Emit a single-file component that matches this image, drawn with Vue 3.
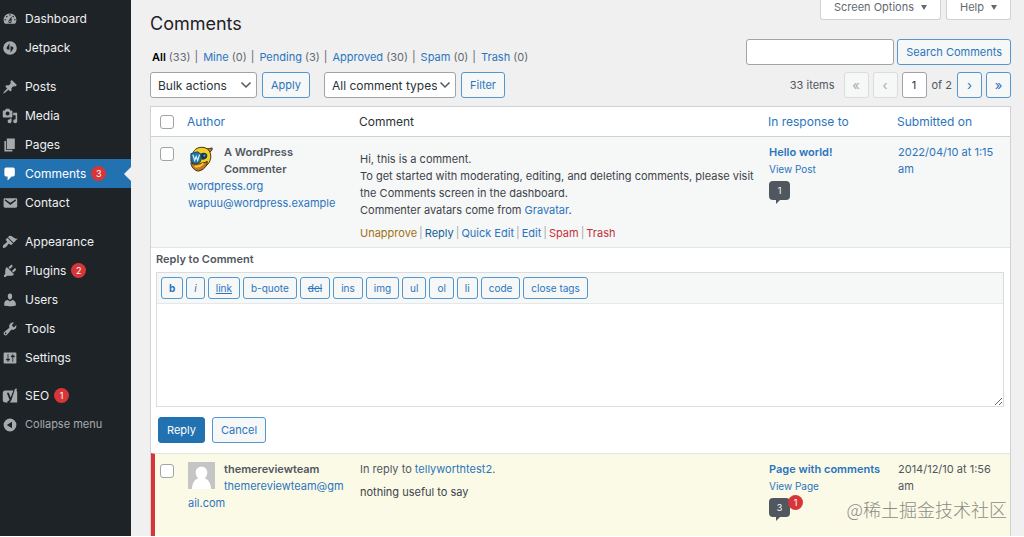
<script setup>
import { ref } from 'vue'

const groups = [
  [
    { label: 'Dashboard', icon: 'M3.76 16h12.48c1.1-1.37 1.76-3.11 1.76-5 0-4.42-3.58-8-8-8s-8 3.58-8 8c0 1.89.66 3.63 1.76 5zM10 4c.55 0 1 .45 1 1s-.45 1-1 1-1-.45-1-1 .45-1 1-1zM6 6c.55 0 1 .45 1 1s-.45 1-1 1-1-.45-1-1 .45-1 1-1zm8 0c.55 0 1 .45 1 1s-.45 1-1 1-1-.45-1-1 .45-1 1-1zm-5.37 5.55L12 7v6c0 1.1-.9 2-2 2s-2-.9-2-2c0-.57.24-1.08.63-1.45zM4 10c.55 0 1 .45 1 1s-.45 1-1 1-1-.45-1-1 .45-1 1-1zm12 0c.55 0 1 .45 1 1s-.45 1-1 1-1-.45-1-1 .45-1 1-1zm-5 3c0-.55-.45-1-1-1s-1 .45-1 1 .45 1 1 1 1-.45 1-1z' },
    { label: 'Jetpack', icon: 'M10 1.5a8.5 8.5 0 1 0 0 17a8.5 8.5 0 1 0 0-17zM9.3 4v8.2C6 12 5 10.5 6 9zM10.7 16V7.8C14 8 15 9.5 14 11z' },
  ],
  [
    { label: 'Posts', icon: 'M10.44 3.02l1.82-1.82 6.36 6.35-1.83 1.82c-1.05-.68-2.48-.57-3.41.36l-.75.75c-.92.93-1.04 2.35-.35 3.41l-1.83 1.82-2.41-2.41-2.8 2.79c-.42.42-3.38 2.71-3.8 2.29s1.86-3.39 2.28-3.81l2.79-2.79L4.1 9.36l1.83-1.82c1.05.69 2.48.57 3.4-.36l.75-.75c.93-.92 1.05-2.35.36-3.41z' },
    { label: 'Media', icon: 'M13 11V4c0-.55-.45-1-1-1h-1.67L9 1H5L3.67 3H2c-.55 0-1 .45-1 1v7c0 .55.45 1 1 1h10c.55 0 1-.45 1-1zM7 4.5c1.38 0 2.5 1.12 2.5 2.5S8.38 9.5 7 9.5 4.5 8.38 4.5 7 5.62 4.5 7 4.5zM14 6h5v10.5c0 1.38-1.12 2.5-2.5 2.5S14 17.88 14 16.5s1.12-2.5 2.5-2.5c.17 0 .34.02.5.05V9h-3V6zm-4 8.05V13h2v3.5c0 1.38-1.12 2.5-2.5 2.5S7 17.88 7 16.5 8.12 14 9.5 14c.17 0 .34.02.5.05z' },
    { label: 'Pages', icon: 'M6 15V2h10v13H6zm-1 1h8v2H3V5h2v11z' },
    { label: 'Comments', count: 3, current: true, icon: 'M5 2h9c1.1 0 2 .9 2 2v7c0 1.1-.9 2-2 2h-2l-5 5v-5H5c-1.1 0-2-.9-2-2V4c0-1.1.9-2 2-2z' },
    { label: 'Contact', icon: 'M3.87 4h13.25C18.37 4 19 4.59 19 5.79v8.42c0 1.19-.63 1.79-1.88 1.79H3.87c-1.25 0-1.88-.6-1.88-1.79V5.79c0-1.2.63-1.79 1.88-1.79zm6.62 8.6l6.74-5.53c.24-.2.43-.66.13-1.07-.29-.41-.82-.42-1.17-.17l-5.7 3.86L4.8 5.83c-.35-.25-.88-.24-1.17.17-.3.41-.11.87.13 1.07z' },
  ],
  [
    { label: 'Appearance', icon: 'M14.48 11.06L7.41 3.99l1.5-1.5c.5-.56 2.3-.47 3.51.32 1.21.8 1.43 1.28 2.91 2.1 1.18.64 2.45 1.26 4.45.85zm-.71.71L6.7 4.7 4.93 6.47c-.39.39-.39 1.02 0 1.41l1.06 1.06c.39.39.39 1.03 0 1.42-.6.6-1.43 1.11-2.21 1.69-.35.26-.7.53-1.01.84C1.43 14.23.4 16.08 1.4 17.07c.99 1 2.84-.03 4.18-1.36.31-.31.58-.66.85-1.02.57-.78 1.08-1.61 1.69-2.21.39-.39 1.02-.39 1.41 0l1.06 1.06c.39.39 1.02.39 1.41 0z' },
    { label: 'Plugins', count: 2, icon: 'M13.11 4.36L9.87 7.6 8 5.73l3.24-3.24c.35-.34 1.05-.2 1.56.32.52.51.66 1.21.31 1.55zm-8 1.77l.91-1.12 9.01 9.01-1.19.84c-.71.71-2.63 1.16-3.82 1.16H6.14L4.9 17.26c-.59.59-1.54.59-2.12 0-.59-.58-.59-1.53 0-2.12l1.24-1.24v-3.88c0-1.13.4-3.19 1.09-3.89zm7.26 3.97l3.24-3.24c.34-.35 1.04-.21 1.55.31.52.51.66 1.21.31 1.55l-3.24 3.25z' },
    { label: 'Users', icon: 'M10 9.25c-2.27 0-2.73-3.44-2.73-3.44C7 4.02 7.82 2 9.97 2c2.16 0 2.98 2.02 2.71 3.81 0 0-.41 3.44-2.68 3.44zm0 2.57L12.72 10c2.39 0 4.52 2.33 4.52 4.53v2.49s-3.65 1.13-7.24 1.13c-3.65 0-7.24-1.13-7.24-1.13v-2.49c0-2.25 1.94-4.48 4.47-4.48z' },
    { label: 'Tools', icon: 'M16.68 9.77c-1.34 1.34-3.3 1.67-4.95.99l-5.41 6.52c-.99.99-2.59.99-3.58 0s-.99-2.59 0-3.57l6.52-5.42c-.68-1.65-.35-3.61.99-4.95 1.28-1.28 3.12-1.62 4.72-1.06l-2.89 2.89 2.82 2.82 2.86-2.87c.53 1.58.18 3.39-1.08 4.65zM3.81 16.21c.4.39 1.04.39 1.43 0 .4-.4.4-1.04 0-1.43-.39-.4-1.03-.4-1.43 0-.39.39-.39 1.03 0 1.43z' },
    { label: 'Settings', icon: 'M18 16V4c0-.55-.45-1-1-1H3c-.55 0-1 .45-1 1v12c0 .55.45 1 1 1h14c.55 0 1-.45 1-1zM8 11h1c.55 0 1 .45 1 1s-.45 1-1 1H8v1.5c0 .28-.22.5-.5.5s-.5-.22-.5-.5V13H6c-.55 0-1-.45-1-1s.45-1 1-1h1V5.5c0-.28.22-.5.5-.5s.5.22.5.5V11zm5-2h-1c-.55 0-1-.45-1-1s.45-1 1-1h1V5.5c0-.28.22-.5.5-.5s.5.22.5.5V7h1c.55 0 1 .45 1 1s-.45 1-1 1h-1v5.5c0 .28-.22.5-.5.5s-.5-.22-.5-.5V9z' },
  ],
  [
    { label: 'SEO', count: 1, icon: 'M4 3h10.3l-3.6 9L8.6 6H6l3.4 8.6c-.4 1.2-1 1.7-2.4 1.8V18H4c-1.6 0-3-1.2-3-2.8V6c0-1.7 1.3-3 3-3zM16.3 1h2.5l-.7 2c.6.6.9 1.5.9 2.8V18H9.5c1.2-.8 1.9-1.8 2.4-3.2z' },
  ],
]

const filters = [
  { label: 'All', count: 33, current: true },
  { label: 'Mine', count: 0 },
  { label: 'Pending', count: 3 },
  { label: 'Approved', count: 30 },
  { label: 'Spam', count: 0 },
  { label: 'Trash', count: 0 },
]

const tags = [
  { label: 'b', look: 'bold' },
  { label: 'i', look: 'italic' },
  { label: 'link', look: 'underlined' },
  { label: 'b-quote' },
  { label: 'del', look: 'struck' },
  { label: 'ins' },
  { label: 'img' },
  { label: 'ul' },
  { label: 'ol' },
  { label: 'li' },
  { label: 'code' },
  { label: 'close tags' },
]

const bulk = ref('Bulk actions')
const type = ref('All comment types')
const query = ref('')
const page = ref('1')
const reply = ref('')
</script>

<template>
  <div class="admin">
    <nav class="sidebar" aria-label="Main menu">
      <ul v-for="(group, g) in groups" :key="g" class="group">
        <li v-for="item in group" :key="item.label">
          <a href="#" class="item" :class="{ current: item.current }">
            <svg class="icon" viewBox="0 0 20 20" aria-hidden="true"><path fill-rule="evenodd" :d="item.icon" /></svg>
            <span>{{ item.label }}</span>
            <span v-if="item.count" class="count">{{ item.count }}</span>
          </a>
        </li>
      </ul>
      <button type="button" class="item collapse">
        <svg class="icon" viewBox="0 0 20 20" aria-hidden="true"><path fill-rule="evenodd" d="M10 2a8 8 0 1 0 0 16a8 8 0 1 0 0-16zM12.5 6v8L6 10z" /></svg>
        <span>Collapse menu</span>
      </button>
    </nav>

    <main class="content">
      <header class="head">
        <h1>Comments</h1>
        <div class="screen-meta">
          <button type="button">Screen Options <i class="caret"></i></button>
          <button type="button">Help <i class="caret"></i></button>
        </div>
      </header>

      <div class="bar">
        <ul class="filters">
          <li v-for="f in filters" :key="f.label">
            <a href="#" :class="{ on: f.current }">{{ f.label }}</a> ({{ f.count }})
          </li>
        </ul>
        <form class="search" @submit.prevent>
          <input v-model="query" type="search" class="field" aria-label="Search Comments" />
          <button class="button">Search Comments</button>
        </form>
      </div>

      <div class="bar actions-bar">
        <div class="set">
          <span class="pick">
            <select v-model="bulk" aria-label="Select bulk action"><option>Bulk actions</option></select>
            <svg viewBox="0 0 12 12" aria-hidden="true"><path d="M1.5 3.5L6 8l4.5-4.5" /></svg>
          </span>
          <button type="button" class="button">Apply</button>
        </div>
        <div class="set">
          <span class="pick types">
            <select v-model="type" aria-label="Filter by comment type"><option>All comment types</option></select>
            <svg viewBox="0 0 12 12" aria-hidden="true"><path d="M1.5 3.5L6 8l4.5-4.5" /></svg>
          </span>
          <button type="button" class="button">Filter</button>
        </div>
        <div class="pager">
          <span class="total">33 items</span>
          <button type="button" class="button step" disabled>«</button>
          <button type="button" class="button step" disabled>‹</button>
          <input v-model="page" class="field page" aria-label="Current page" />
          <span class="of">of 2</span>
          <button type="button" class="button step">›</button>
          <button type="button" class="button step">»</button>
        </div>
      </div>

      <table class="list">
        <colgroup>
          <col class="c-check" /><col class="c-author" /><col /><col class="c-response" /><col class="c-date" />
        </colgroup>
        <thead>
          <tr>
            <th><input type="checkbox" aria-label="Select all" /></th>
            <th><a href="#">Author</a></th>
            <th>Comment</th>
            <th><a href="#">In response to</a></th>
            <th><a href="#">Submitted on</a></th>
          </tr>
        </thead>
        <tbody>
          <tr class="approved">
            <td class="check"><input type="checkbox" aria-label="Select comment by A WordPress Commenter" /></td>
            <td>
              <svg class="avatar" viewBox="0 0 28 28" aria-hidden="true">
                <path d="M16 3c3 1.5 6 1 9 0 .5 2.5-1 4-4 4.5z" fill="#c27725" stroke="#3d2b10" />
                <path d="M5 9C6 4 12 1 18 3c6 2 7 10 4 15-3 5-11 8-15 5-3-3-3-9-2-14z" fill="#f5cf26" stroke="#3d2b10" />
                <path d="M3 9l7-2 4 3-1 7-5 3-5-3z" fill="#1f78a8" stroke="#18435c" />
                <path d="M5 10l2 6 1.5-4 1.5 4 2-6" fill="none" stroke="#d9f0fa" stroke-width="1.3" />
                <path d="M13 9c3-2 7-1 7 2s-3 5-6 4z" fill="#173a4c" />
                <circle cx="17" cy="11" r="1.2" fill="#4fa3cf" />
                <path d="M3 18c3 3 6 2 9 1 3 0 6-1 8-2 0 5-4 9-9 10-4 0-8-4-8-9z" fill="#c27725" stroke="#3d2b10" />
                <path d="M7 22c3 1 6 0 9-3" fill="none" stroke="#f5cf26" stroke-width="2" />
              </svg>
              <strong>A WordPress Commenter</strong>
              <div class="contact"><a href="#">wordpress.org</a><br /><a href="#">wapuu@wordpress.example</a></div>
            </td>
            <td class="message">
              <p>Hi, this is a comment.<br />To get started with moderating, editing, and deleting comments, please visit the Comments screen in the dashboard.<br />Commenter avatars come from <a href="#">Gravatar</a>.</p>
              <div class="row-actions">
                <a href="#" class="unapprove">Unapprove</a><i>|</i><a href="#" class="strong">Reply</a><i>|</i><a href="#">Quick Edit</a><i>|</i><a href="#">Edit</a><i>|</i><a href="#" class="danger">Spam</a><i>|</i><a href="#" class="danger">Trash</a>
              </div>
            </td>
            <td>
              <a href="#"><strong>Hello world!</strong></a><br /><a href="#" class="view">View Post</a>
              <div class="bubbles"><a href="#" class="bubble">1</a></div>
            </td>
            <td><a href="#">2022/04/10 at 1:15 am</a></td>
          </tr>
          <tr class="reply-row">
            <td colspan="5">
              <label for="reply" class="legend">Reply to Comment</label>
              <div class="editor">
                <div class="toolbar">
                  <button v-for="tag in tags" :key="tag.label" type="button" class="tag" :class="tag.look">{{ tag.label }}</button>
                </div>
                <textarea id="reply" v-model="reply"></textarea>
              </div>
              <div class="submit">
                <button type="button" class="button primary">Reply</button>
                <button type="button" class="button">Cancel</button>
              </div>
            </td>
          </tr>
          <tr class="pending">
            <td class="check"><input type="checkbox" aria-label="Select comment by themereviewteam" /></td>
            <td class="breakable">
              <svg class="avatar" viewBox="0 0 28 28" aria-hidden="true">
                <path fill="#c5c5c5" d="M0 0h28v28H0z" />
                <path fill="#fff" d="M14 5c4 0 6 2.5 6 6 0 2.5-1 4.5-2.5 6 4 1 6 5 6.5 11H4c.5-6 2.5-10 6.5-11C9 15.5 8 13.5 8 11c0-3.5 2-6 6-6z" />
              </svg>
              <strong>themereviewteam</strong><br /><a href="#">themereviewteam@gmail.com</a>
            </td>
            <td>
              In reply to <a href="#">tellyworthtest2</a>.
              <p class="text">nothing useful to say</p>
            </td>
            <td>
              <a href="#"><strong>Page with comments</strong></a><br /><a href="#" class="view">View Page</a>
              <div class="bubbles"><a href="#" class="bubble">3</a><span class="waiting">1</span></div>
            </td>
            <td>2014/12/10 at 1:56 am</td>
          </tr>
        </tbody>
      </table>
    </main>
    <div class="watermark">@稀土掘金技术社区</div>
  </div>
</template>

<style>
body {
  background: #fff;
}
</style>

<style scoped>
* {
  box-sizing: border-box;
}
.admin {
  position: relative;
  display: flex;
  min-height: calc(100vh - 1px);
  background: #f0f0f1;
  color: #50575e;
  font: 11px/17px Inter, "Liberation Sans", sans-serif;
}
button,
input,
select,
textarea {
  font: inherit;
  color: inherit;
  margin: 0;
}
a {
  color: #2a75bd;
  text-decoration: none;
}
ul {
  list-style: none;
  margin: 0;
  padding: 0;
}

.sidebar {
  flex: none;
  width: 131px;
  padding-top: 4px;
  background: #1d2327;
}
.group {
  margin-bottom: 10px;
}
.group:nth-of-type(3) {
  margin-bottom: 9px;
}
.group:nth-of-type(4) {
  margin-bottom: 0;
}
.item {
  position: relative;
  display: flex;
  align-items: center;
  height: 29px;
  padding-left: 2px;
  color: #f0f0f1;
  font-size: 12px;
}
.icon {
  width: 16px;
  height: 16px;
  margin-right: 7px;
  fill: #a7aaad;
}
.item.current {
  background: #2271b1;
  color: #fff;
}
.current .icon {
  fill: #fff;
}
.item.current::after {
  content: "";
  position: absolute;
  right: 0;
  border: 7px solid transparent;
  border-right-color: #f0f0f1;
  border-left: 0;
}
.count,
.waiting {
  width: 15px;
  height: 15px;
  border-radius: 8px;
  background: #d63638;
  color: #fff;
  font-size: 9px;
  line-height: 15px;
  text-align: center;
}
.count {
  margin-left: 5px;
}
.collapse {
  width: 100%;
  border: 0;
  background: none;
  color: #a7aaad;
  font-size: 11px;
}

.content {
  flex: 1;
  min-width: 0;
  padding: 0 13px 0 19px;
}
.head,
.bar,
.set,
.search,
.pager,
.screen-meta,
.filters {
  display: flex;
}
.head {
  justify-content: space-between;
  height: 39px;
}
h1 {
  margin: 11px 0 0;
  color: #1d2327;
  font-size: 18px;
  font-weight: 400;
  line-height: 25px;
}
.screen-meta {
  gap: 5px;
}
.screen-meta button {
  display: flex;
  align-items: center;
  height: 20px;
  padding: 0 13px 4px;
  border: 1px solid #d0d1d4;
  border-top: 0;
  border-radius: 0 0 3px 3px;
  background: #fff;
  color: #646970;
}
.caret {
  margin-left: 7px;
  border: 3px solid transparent;
  border-top: 5px solid #646970;
  border-bottom: 0;
}
.bar {
  justify-content: space-between;
}
.filters {
  align-items: center;
  padding: 10px 0 0 2px;
  color: #646970;
}
.filters li + li::before {
  content: "|";
  margin: 0 5px 0 4px;
}
.filters .on {
  color: #000;
  font-weight: 600;
}
.search {
  gap: 3px;
}
.field {
  width: 148px;
  height: 26px;
  border: 1px solid #a0a3a7;
  border-radius: 3px;
  background: #fff;
  color: #2c3338;
}
.button {
  height: 26px;
  padding: 0 8px;
  border: 1px solid #5596cf;
  border-radius: 3px;
  background: #f6f7f7;
  color: #2a75bd;
  white-space: nowrap;
}
.actions-bar {
  gap: 14px;
  margin: 7px 0 8px;
}
.head + .bar + .actions-bar {
  margin-top: 6px;
}
.set {
  gap: 5px;
}
.pick {
  position: relative;
  height: 26px;
}
.pick select {
  appearance: none;
  width: 107px;
  height: 26px;
  padding: 0 18px 0 7px;
  border: 1px solid #a0a3a7;
  border-radius: 3px;
  background: #fff;
  color: #2c3338;
  font-size: 12px;
}
.types select {
  width: 132px;
}
.pick svg {
  position: absolute;
  top: 7px;
  right: 5px;
  width: 12px;
  height: 12px;
  fill: none;
  stroke: #50575e;
  stroke-width: 1.5;
  pointer-events: none;
}
.pager {
  flex: 1;
  justify-content: flex-end;
  align-items: center;
  gap: 4px;
}
.total {
  margin-right: 5px;
}
.step {
  width: 25px;
  padding: 0;
  font-size: 13px;
}
.step:disabled {
  border-color: #dcdcde;
  color: #a7aaad;
}
.page {
  width: 25px;
  padding: 0;
  text-align: center;
}
.of {
  margin: 0 1px;
}

.list {
  width: 100%;
  border: 1px solid #d0d1d4;
  border-bottom: 0;
  border-spacing: 0;
  background: #fff;
  table-layout: fixed;
}
.c-check {
  width: 29px;
}
.c-author {
  width: 172px;
}
.c-response {
  width: 129px;
}
.c-date {
  width: 120px;
}
th {
  height: 30px;
  padding: 0 7px;
  border-bottom: 1px solid #d0d1d4;
  color: #2c3338;
  font-size: 12px;
  font-weight: 400;
  text-align: left;
}
td {
  padding: 7px 4px 0 8px;
  vertical-align: top;
}
th:first-child,
td.check {
  padding-left: 9px;
  padding-right: 0;
}
input[type="checkbox"] {
  appearance: none;
  display: block;
  width: 14px;
  height: 14px;
  border: 1px solid #a0a3a7;
  border-radius: 3px;
  background: #fff;
}
td.check {
  padding-top: 10px;
}
.approved td {
  height: 111px;
  border-bottom: 1px solid #e2e4e7;
  background: #f6f7f7;
}
.avatar {
  float: left;
  width: 27px;
  height: 27px;
  margin: 1px 9px 0 0;
}
.contact {
  clear: left;
}
strong {
  font-weight: 600;
}
.message {
  color: #3c434a;
}
.message p {
  margin: 7px 0 6px;
}
.row-actions i {
  margin: 0 2px;
  color: #a7aaad;
  font-style: normal;
}
.unapprove {
  color: #9e7212;
}
.strong {
  color: #135e96;
}
.danger {
  color: #c5303c;
}
.view {
  font-size: 10px;
}
.bubbles {
  display: flex;
  margin-top: 3px;
}
.bubble {
  position: relative;
  width: 21px;
  height: 19px;
  border-radius: 4px;
  background: #50575e;
  color: #fff;
  font-size: 9px;
  line-height: 19px;
  text-align: center;
}
.bubble::after {
  content: "";
  position: absolute;
  top: 19px;
  left: 7px;
  border-top: 4px solid #50575e;
  border-right: 4px solid transparent;
}
.waiting {
  margin: -3px 0 0 -2px;
  z-index: 1;
}
.reply-row td {
  padding: 3px 6px 10px 5px;
}
.legend {
  display: block;
  margin-bottom: 4px;
  font-weight: 600;
}
.editor {
  border: 1px solid #dcdcde;
}
.toolbar {
  display: flex;
  flex-wrap: wrap;
  gap: 3px;
  padding: 4px;
  border-bottom: 1px solid #e6e7e9;
  background: #f6f7f7;
}
.tag {
  height: 22px;
  padding: 0 7px;
  border: 1px solid #5596cf;
  border-radius: 3px;
  background: #f6f7f7;
  color: #2a75bd;
  font-size: 10px;
}
.bold {
  font-weight: 700;
}
.italic {
  font-style: italic;
}
.underlined {
  text-decoration: underline;
}
.struck {
  text-decoration: line-through;
}
textarea {
  display: block;
  width: 100%;
  height: 102px;
  border: 0;
  outline: 0;
  resize: vertical;
}
.submit {
  display: flex;
  gap: 7px;
  margin: 10px 2px 0;
}
.primary {
  border-color: #2271b1;
  background: #2271b1;
  color: #fff;
}
.pending td {
  height: 83px;
  border-top: 1px solid #e4e5dc;
  background: #fbfae7;
}
.pending .check {
  border-left: 4px solid #d63638;
  padding-left: 5px;
}
.breakable {
  word-break: break-all;
}
.text {
  margin: 6px 0 0;
  color: #3c434a;
}
.watermark {
  position: absolute;
  right: 17px;
  bottom: 15px;
  color: #8c8c82;
  font: 300 18px/24px "Noto Sans CJK SC", sans-serif;
}
</style>
